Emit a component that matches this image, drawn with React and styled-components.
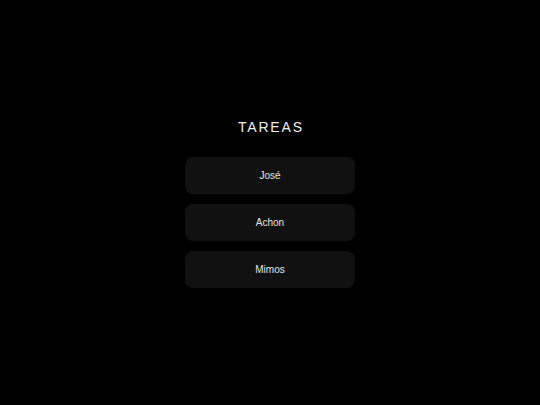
import styled, { createGlobalStyle } from "styled-components";

const GlobalStyle = createGlobalStyle`
  html, body {
    margin: 0;
    padding: 0;
    background: #000;
  }
  body {
    font-family: "Liberation Sans", Arial, sans-serif;
    color: #fff;
  }
`;

const tasks = ["José", "Achon", "Mimos"];

export default function App() {
  return (
    <>
      <GlobalStyle />
      <Page>
        <Title>TAREAS</Title>
        <List>
          {tasks.map((t) => (
            <Task key={t}>{t}</Task>
          ))}
        </List>
      </Page>
    </>
  );
}

const Page = styled.main`
  min-height: 100vh;
  box-sizing: border-box;
  padding-top: 2px;
  display: flex;
  flex-direction: column;
  align-items: center;
  justify-content: center;
`;

const Title = styled.h1`
  margin: 0 0 22px;
  font-size: 14px;
  line-height: 16px;
  font-weight: 400;
  letter-spacing: 1.8px;
  padding-left: 1.8px;
  color: #eeeeee;
`;

const List = styled.div`
  display: flex;
  flex-direction: column;
  gap: 10px;
`;

const Task = styled.div`
  width: 170px;
  height: 37px;
  display: flex;
  align-items: center;
  justify-content: center;
  background: #111;
  border-radius: 8px;
  font-size: 10px;
  color: #e6e6e6;
`;
